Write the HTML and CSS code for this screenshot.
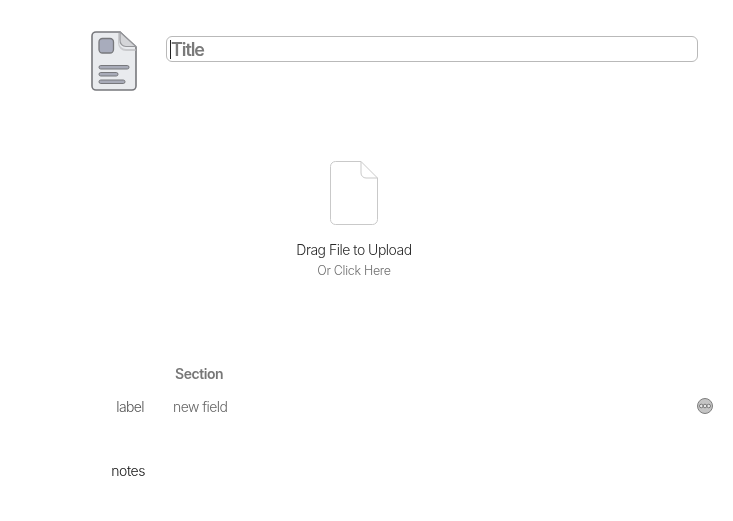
FILE: index.html
```html
<!DOCTYPE html>
<html lang="en">
<head>
<meta charset="utf-8">
<title>New Document</title>
<link rel="stylesheet" href="styles.css">
</head>
<body>
<header class="head">
  <svg class="doc-icon" width="46" height="60" viewBox="0 0 46 60">
    <path d="M5 1H29L45 16V55a4 4 0 0 1-4 4H5a4 4 0 0 1-4-4V5a4 4 0 0 1 4-4Z" fill="#e9ebee" stroke="#77787c" stroke-width="1.600"/>
    <path d="M28 2V11a7 7 0 0 0 7 7H44.500V20H35a8 8 0 0 1-8-8V2Z" fill="#c9cacd"/>
    <path d="M29 1V9a6 6 0 0 0 6 6.500H45Z" fill="#d4d5d8" stroke="#95969a" stroke-width="1.200" stroke-linejoin="round"/>
    <rect x="8" y="7.500" width="14.500" height="14.500" rx="3.500" fill="#a8acbc" stroke="#77787c" stroke-width="1.300"/>
    <rect x="8" y="34.500" width="30" height="3.500" rx="1.750" fill="#a8abb8" stroke="#77787c" stroke-width="1"/>
    <rect x="8" y="41.500" width="19" height="3.500" rx="1.750" fill="#a8abb8" stroke="#77787c" stroke-width="1"/>
    <rect x="8" y="49" width="26" height="3.500" rx="1.750" fill="#a8abb8" stroke="#77787c" stroke-width="1"/>
  </svg>
  <div class="title-box"><span class="caret"></span><span class="title-ph">Title</span></div>
</header>

<section class="upload">
  <svg class="file-icon" width="48" height="64" viewBox="0 0 48 64">
    <path d="M5.500 .5H31L47.500 17V58.500a5 5 0 0 1-5 5H5.500a5 5 0 0 1-5-5V5.500a5 5 0 0 1 5-5Z" fill="#fff" stroke="#c9c9c9"/>
    <path d="M31 .5V12a5 5 0 0 0 5 5H47.500" fill="none" stroke="#c9c9c9"/>
  </svg>
  <div class="upload-main">Drag File to Upload</div>
  <div class="upload-sub">Or Click Here</div>
</section>

<section class="form">
  <div class="row section-row">
    <div class="key"></div>
    <div class="section-name">Section</div>
  </div>
  <div class="row field-row">
    <div class="key">label</div>
    <div class="value">new field</div>
    <svg class="more" width="18" height="18" viewBox="0 0 18 18">
      <circle cx="9" cy="9" r="7.500" fill="#c4c4c4" stroke="#7d7d7d"/>
      <circle cx="5.300" cy="9" r="1.800" fill="#e8e8e8" stroke="#666" stroke-width=".8"/>
      <circle cx="9" cy="9" r="1.800" fill="#e8e8e8" stroke="#666" stroke-width=".8"/>
      <circle cx="12.700" cy="9" r="1.800" fill="#e8e8e8" stroke="#666" stroke-width=".8"/>
    </svg>
  </div>
  <div class="row notes-row">
    <div class="key notes">notes</div>
  </div>
</section>
</body>
</html>
```
FILE: styles.css
```css
* { box-sizing: border-box; }
html, body { margin: 0; padding: 0; background: #fff; }
body {
  width: 733px;
  height: 521px;
  overflow: hidden;
  font-family: Inter, "Liberation Sans", sans-serif;
  letter-spacing: -0.6px;
}
.head {
  display: flex;
  align-items: flex-start;
  padding: 31px 35px 0 91px;
}
.doc-icon { flex: none; }
.title-box {
  flex: none;
  width: 532px;
  height: 26px;
  margin: 5px 0 0 29px;
  border: 1px solid #b9b9b9;
  border-radius: 6px;
  display: flex;
  align-items: center;
  padding-left: 3px;
}
.caret { width: 1px; height: 19px; background: #222; flex: none; }
.title-ph { font-size: 18px; font-weight: 600; color: #7a7a7a; letter-spacing: -1.100px; will-change: opacity; }
.upload {
  display: flex;
  flex-direction: column;
  align-items: center;
  width: 708px;
  margin-top: 70px;
  will-change: opacity;
}
.upload-main { margin-top: 15px; font-size: 14px; line-height: 20px; color: #2a2a2a; font-weight: 300; letter-spacing: -0.5px; }
.upload-sub { margin-top: 2px; font-size: 12.500px; line-height: 18px; color: #707070; font-weight: 300; letter-spacing: -0.32px; }
.form { margin-top: 83px; will-change: opacity; }
.row { display: flex; align-items: center; }
.key { width: 144px; text-align: right; font-size: 14px; font-weight: 300; color: #555; }
.section-row { height: 20px; }
.section-name { margin-left: 31px; font-size: 14px; font-weight: 600; color: #777; letter-spacing: -0.45px; }
.field-row { height: 20px; margin-top: 13px; padding-right: 19px; }
.value { margin-left: 29px; flex: 1; font-size: 14px; font-weight: 300; color: #666; letter-spacing: -0.55px; }
.more { flex: none; }
.notes-row { height: 20px; margin-top: 44px; }
.key.notes { width: 145px; font-weight: 300; color: #111; letter-spacing: -0.45px; }
```
